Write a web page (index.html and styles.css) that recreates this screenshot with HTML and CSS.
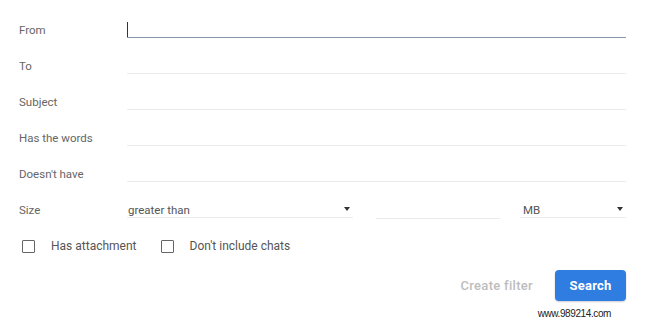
FILE: index.html
```html
<!DOCTYPE html>
<html lang="en">
<head>
  <meta charset="UTF-8" />
  <meta name="viewport" content="width=device-width, initial-scale=1.0" />
  <title>Search filter</title>
  <link rel="stylesheet" href="styles.css">
</head>
<body>
  <div class="filter">
    <div class="row">
      <span class="label">From</span>
      <div class="field active"><span class="caret"></span></div>
    </div>
    <div class="row">
      <span class="label">To</span>
      <div class="field"></div>
    </div>
    <div class="row">
      <span class="label">Subject</span>
      <div class="field"></div>
    </div>
    <div class="row">
      <span class="label">Has the words</span>
      <div class="field"></div>
    </div>
    <div class="row">
      <span class="label">Doesn't have</span>
      <div class="field"></div>
    </div>
    <div class="row">
      <span class="label">Size</span>
      <div class="size">
        <div class="select op">greater than<span class="arrow"></span></div>
        <div class="field num"></div>
        <div class="select unit">MB<span class="arrow"></span></div>
      </div>
    </div>
    <div class="checks">
      <label class="check"><span class="box"></span>Has attachment</label>
      <label class="check"><span class="box"></span>Don't include chats</label>
    </div>
    <div class="actions">
      <span class="create">Create filter</span>
      <button class="search">Search</button>
    </div>
    <div class="mark">www.989214.com</div>
  </div>
</body>
</html>
```

FILE: styles.css
```css
body {
  margin: 0;
  background: #fff;
  font-family: Roboto, "Noto Sans", sans-serif;
  font-size: 11.5px;
  color: #666;
}
.filter {
  width: 646px;
  height: 323px;
  padding: 12px 20px 0 19px;
  box-sizing: border-box;
  position: relative;
}
.row {
  display: grid;
  grid-template-columns: 108px 1fr;
  height: 36px;
  align-items: center;
}
.label { color: #666; }
.field {
  height: 14px;
  border-bottom: 1px solid #ececec;
  margin-top: 1px;
  position: relative;
}
.field.active { border-bottom-color: #8595aa; }
.caret {
  position: absolute;
  left: 0;
  top: -1px;
  width: 1px;
  height: 15px;
  background: #333;
}
.size {
  display: flex;
  align-items: center;
}
.select {
  height: 14px;
  line-height: 14px;
  border-bottom: 1px solid #ececec;
  color: #555;
  display: flex;
  justify-content: space-between;
  align-items: center;
  margin-top: 1px;
}
.select.op { width: 222px; padding-left: 1px; padding-right: 3px; }
.select.unit { width: 100px; margin-left: 20px; padding-left: 3px; padding-right: 3px; }
.field.num { width: 124px; margin-left: 23px; margin-top: 3px; }
.arrow {
  width: 0;
  height: 0;
  border-left: 3.5px solid transparent;
  border-right: 3.5px solid transparent;
  border-top: 4px solid #333;
  margin-top: -2px;
}
.checks {
  display: flex;
  align-items: center;
  height: 36px;
  padding-left: 3px;
}
.check {
  display: flex;
  align-items: center;
  color: #555;
  font-size: 12px;
  margin-right: 24px;
}
.box {
  width: 11px;
  height: 11px;
  border: 1.5px solid #666;
  border-radius: 1px;
  margin-right: 16px;
}
.actions {
  display: flex;
  justify-content: flex-end;
  align-items: center;
  margin-top: 6px;
}
.create {
  color: #bdbdbd;
  font-size: 13px;
  font-weight: 500;
  letter-spacing: 0.3px;
  margin-right: 22px;
}
.search {
  width: 71px;
  height: 31px;
  border: none;
  border-radius: 4px;
  background: #2f7de1;
  color: #fff;
  font-family: Roboto, "Noto Sans", sans-serif;
  font-size: 13px;
  font-weight: 700;
  letter-spacing: 0.2px;
  box-shadow: 0 1px 2px rgba(0,0,0,0.2);
}
.mark {
  position: absolute;
  right: 35px;
  bottom: 4px;
  font-family: "Liberation Sans", Arial, sans-serif;
  font-size: 10px;
  letter-spacing: -0.4px;
  color: #222;
}
```
